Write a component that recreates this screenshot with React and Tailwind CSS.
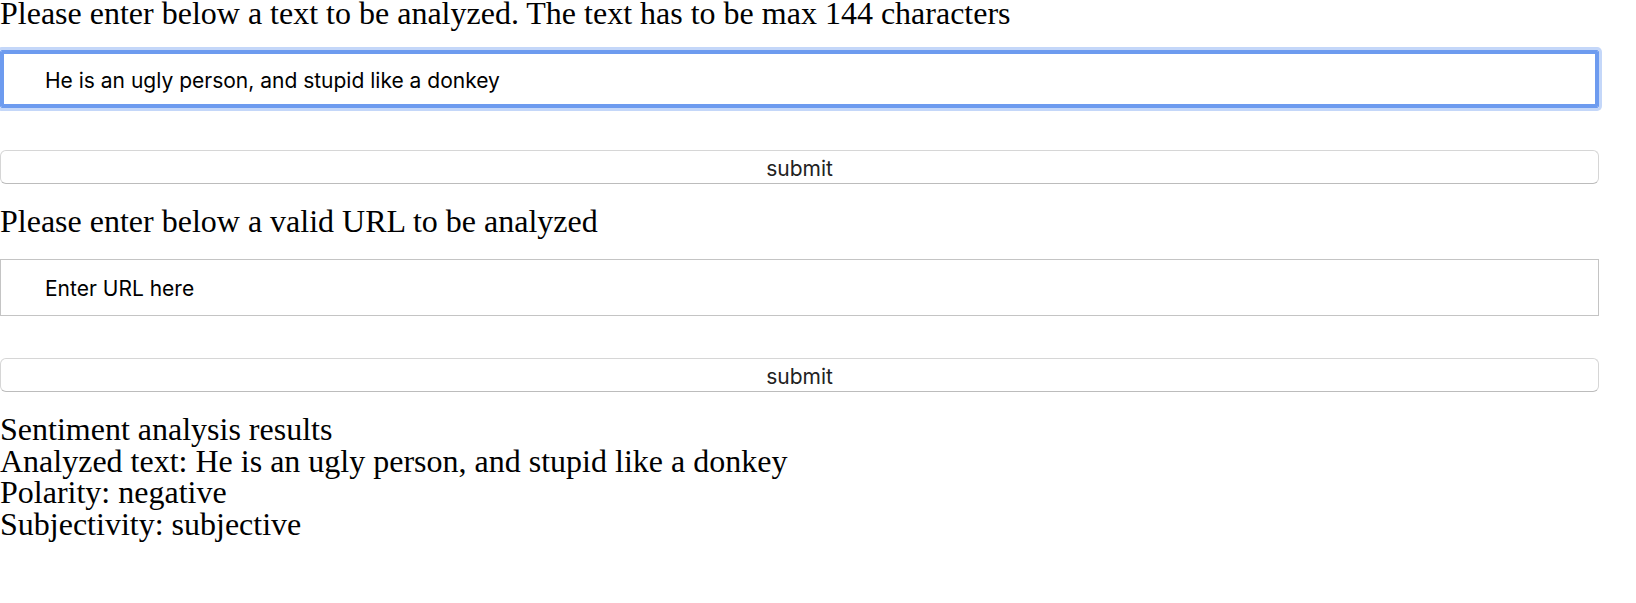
import React from 'react';

const App = () => {
  const result = {
    text: "He is an ugly person, and stupid like a donkey",
    polarity: "negative",
    subjectivity: "subjective",
  };

  return (
    <div className="min-h-screen bg-white text-black font-['Liberation_Serif',serif]">
      <div className="w-[1599px] flex flex-col">
        {/* text form */}
        <p className="text-[32px] leading-[26px]">
          Please enter below a text to be analyzed. The text has to be max 144 characters
        </p>
        <input
          type="text"
          defaultValue={result.text}
          className="mt-[24px] h-[58px] w-full border border-[#6d9bef] shadow-[inset_0_0_0_3px_#6d9bef,0_0_0_3px_#c4d7f9] rounded-[2px] pl-[44px] pt-[2px] text-[21px] text-black font-['Inter',sans-serif] outline-none"
        />
        <button className="mt-[42px] h-[34px] w-full rounded-[6px] border border-[#d6d6d6] border-b-[#bcbcbc] bg-white pt-[3px] text-[21px] text-[#222] font-['Inter',sans-serif] flex items-center justify-center">
          submit
        </button>

        {/* url form */}
        <p className="mt-[24px] text-[32px] leading-[26px]">
          Please enter below a valid URL to be analyzed
        </p>
        <input
          type="text"
          placeholder="Enter URL here"
          className="mt-[25px] h-[57px] w-full border border-[#c4c4c4] pl-[44px] pt-[2px] text-[21px] font-['Inter',sans-serif] placeholder:text-black outline-none"
        />
        <button className="mt-[42px] h-[34px] w-full rounded-[6px] border border-[#d6d6d6] border-b-[#bcbcbc] bg-white pt-[3px] text-[21px] text-[#222] font-['Inter',sans-serif] flex items-center justify-center">
          submit
        </button>

        {/* results */}
        <div className="mt-[22px] text-[32px] leading-[31.7px]">
          <div>Sentiment analysis results</div>
          <div>Analyzed text: {result.text}</div>
          <div>Polarity: {result.polarity}</div>
          <div>Subjectivity: {result.subjectivity}</div>
        </div>
      </div>
    </div>
  );
};

export default App;
